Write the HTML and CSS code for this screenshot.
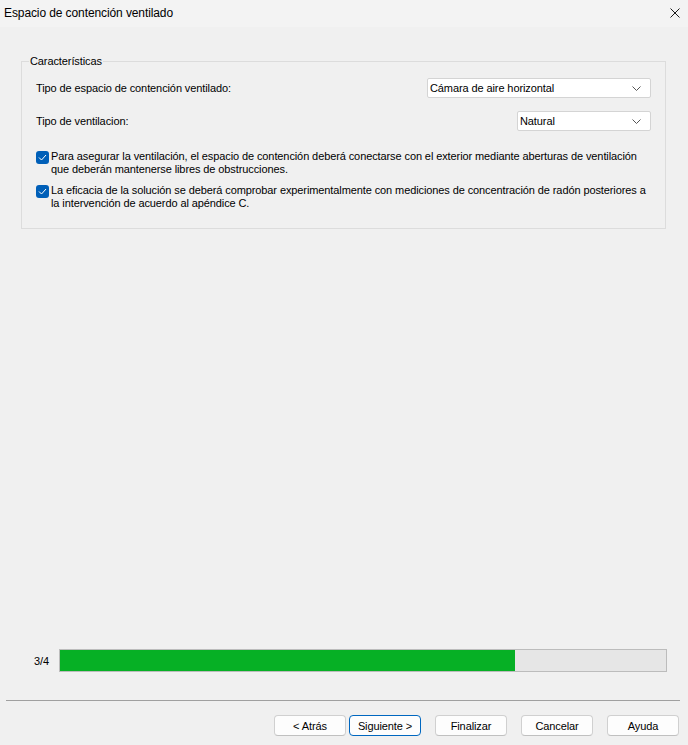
FILE: index.html
```html
<!DOCTYPE html>
<html lang="es">
<head>
    <meta charset="UTF-8">
    <title>Espacio de contención ventilado</title>
    <link rel="stylesheet" href="styles.css">
</head>
<body>
    <div class="titlebar">
        <span class="title">Espacio de contención ventilado</span>
        <svg class="close" width="10" height="10" viewBox="0 0 10 10">
            <path d="M0.5 0.5 L9.5 9.5 M9.5 0.5 L0.5 9.5" stroke="#1a1a1a" stroke-width="1" fill="none"/>
        </svg>
    </div>

    <div class="content">
        <fieldset class="group">
            <legend>Características</legend>

            <div class="field-row">
                <span class="label">Tipo de espacio de contención ventilado:</span>
                <div class="combo combo-wide">
                    <span>Cámara de aire horizontal</span>
                    <svg width="9" height="5" viewBox="0 0 9 5"><path d="M0.5 0.5 L4.5 4.5 L8.5 0.5" stroke="#555" fill="none"/></svg>
                </div>
            </div>

            <div class="field-row">
                <span class="label">Tipo de ventilacion:</span>
                <div class="combo combo-narrow">
                    <span>Natural</span>
                    <svg width="9" height="5" viewBox="0 0 9 5"><path d="M0.5 0.5 L4.5 4.5 L8.5 0.5" stroke="#555" fill="none"/></svg>
                </div>
            </div>

            <label class="check first">
                <span class="box"><svg width="9" height="7" viewBox="0 0 9 7"><path d="M1 3.5 L3.5 6 L8 1" stroke="#fff" stroke-width="1" fill="none"/></svg></span>
                <span class="check-text">Para asegurar la ventilación, el espacio de contención deberá conectarse con el exterior mediante aberturas de ventilación que deberán mantenerse libres de obstrucciones.</span>
            </label>

            <label class="check">
                <span class="box"><svg width="9" height="7" viewBox="0 0 9 7"><path d="M1 3.5 L3.5 6 L8 1" stroke="#fff" stroke-width="1" fill="none"/></svg></span>
                <span class="check-text">La eficacia de la solución se deberá comprobar experimentalmente con mediciones de concentración de radón posteriores a la intervención de acuerdo al apéndice C.</span>
            </label>
        </fieldset>
    </div>

    <div class="progress-row">
        <span class="step">3/4</span>
        <div class="progress"><div class="progress-fill" style="width: 75%"></div></div>
    </div>

    <div class="separator"></div>

    <div class="buttons">
        <button>&lt; Atrás</button>
        <button class="primary">Siguiente &gt;</button>
        <button class="spaced">Finalizar</button>
        <button class="spaced">Cancelar</button>
        <button class="spaced">Ayuda</button>
    </div>
</body>
</html>
```

FILE: styles.css
```css
html, body {
    margin: 0;
    padding: 0;
    height: 745px;
}
body {
    background: #f0f0f0;
    color: #000;
    font-family: 'Liberation Sans', Arial, sans-serif;
    font-size: 11px;
    letter-spacing: -0.1px;
    display: flex;
    flex-direction: column;
    overflow: hidden;
}
.titlebar {
    height: 27px;
    background: #f3f3f3;
    display: flex;
    align-items: center;
    justify-content: space-between;
    padding: 0 7px 2px 4px;
    box-sizing: border-box;
}
.title {
    font-size: 12px;
}
.close {
    display: block;
    margin-right: 1px;
}
.content {
    flex: 1;
    padding: 0 22px 0 21px;
}
.group {
    margin: 27px 0 0 0;
    padding: 10px 14px 19px 14px;
    border: 1px solid #dcdcdc;
    display: flex;
    flex-direction: column;
}
legend {
    padding: 0 1px;
    margin-left: -7px;
    line-height: 14px;
}
.field-row {
    display: flex;
    align-items: center;
    justify-content: space-between;
    height: 20px;
    margin-bottom: 13px;
}
.combo {
    height: 20px;
    box-sizing: border-box;
    background: #fff;
    border: 1px solid #d4d4d4;
    border-radius: 2px;
    display: flex;
    align-items: center;
    justify-content: space-between;
    padding: 0 9px 0 2px;
}
.combo-wide {
    width: 224px;
}
.combo-narrow {
    width: 134px;
}
.check {
    display: flex;
    align-items: flex-start;
    line-height: 12.5px;
}
.check.first {
    margin-top: 6px;
    margin-bottom: 9px;
}
.box {
    width: 13px;
    height: 13px;
    flex: none;
    background: #005fb8;
    border-radius: 3px;
    margin: 1px 2px 0 0;
    display: flex;
    align-items: center;
    justify-content: center;
}
.box svg {
    display: block;
}
.progress-row {
    display: flex;
    align-items: center;
    padding: 0 21px 0 34px;
    margin-bottom: 28px;
}
.step {
    width: 25px;
}
.progress {
    flex: 1;
    height: 23px;
    box-sizing: border-box;
    border: 1px solid #bcbcbc;
    background: #e6e6e6;
}
.progress-fill {
    height: 100%;
    background: #06b025;
}
.separator {
    height: 1px;
    background: #a0a0a0;
    margin: 0 8px 14px 6px;
}
.buttons {
    display: flex;
    justify-content: flex-end;
    padding: 0 9px 9px 0;
}
button {
    width: 72px;
    height: 21px;
    box-sizing: border-box;
    background: #fdfdfd;
    border: 1px solid #d0d0d0;
    border-bottom-color: #c0c0c0;
    border-radius: 4px;
    font-family: 'Liberation Sans', Arial, sans-serif;
    font-size: 11px;
    letter-spacing: -0.1px;
    color: #000;
    padding: 0;
    margin-left: 3px;
}
button.spaced {
    margin-left: 14px;
}
button.primary {
    border-color: #0067c0;
}
```
